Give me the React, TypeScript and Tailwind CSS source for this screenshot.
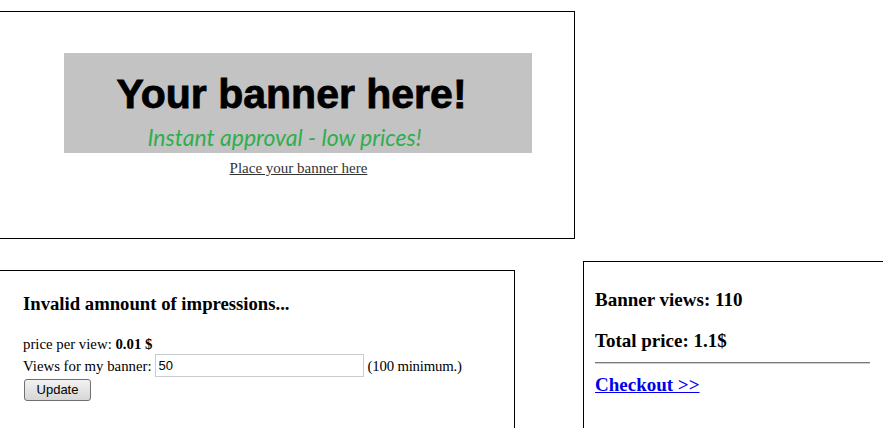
import { useState } from "react";

const serif = "font-['Liberation_Serif',serif]";

const App = () => {
  const [views, setViews] = useState("50");

  return (
    <div className={`h-[428px] w-full overflow-hidden bg-white text-black ${serif}`}>
      {/* banner box */}
      <div className="mt-[11px] -ml-[2px] flex h-[228px] w-[577px] flex-col items-center border border-black pl-[24px] pt-[41px]">
        <div className="-ml-[2px] flex h-[100px] w-[468px] flex-col items-center bg-[#c3c3c3]">
          <div className="mt-[19px] pr-[12px] font-['Liberation_Sans',sans-serif] text-[41px] font-bold leading-[44px] [-webkit-text-stroke:0.8px_black]">
            Your banner here!
          </div>
          <div className="mt-[8px] -ml-[26px] font-['Lato',sans-serif] text-[23px] italic leading-[26px] text-[#2fae4e]">
            Instant approval - low prices!
          </div>
        </div>
        <a href="#" className="mt-[6px] text-[15px] leading-[18px] text-[#333] underline">
          Place your banner here
        </a>
      </div>

      <div className="flex items-start">
        {/* order form */}
        <div className="-ml-[2px] mt-[31px] h-[200px] w-[517px] shrink-0 border border-black pl-[24px] pt-[22px]">
          <h3 className="text-[18.7px] font-bold leading-[22px]">Invalid amnount of impressions...</h3>
          <div className="mt-[20px] text-[14.8px] leading-[18px]">
            price per view: <b>0.01 $</b>
          </div>
          <div className="mt-[1px] flex items-center text-[14.8px] leading-[18px]">
            <span>Views for my banner:</span>
            <input
              value={views}
              onChange={(e) => setViews(e.target.value)}
              className="ml-[3px] h-[23px] w-[209px] border border-[#c9ccd1] px-[3px] font-['Liberation_Sans',sans-serif] text-[13px] outline-none"
            />
            <span className="ml-[4px] tracking-[-0.2px]">(100 minimum.)</span>
          </div>
          <button className="ml-[1px] mt-[1px] h-[22px] w-[67px] rounded-[3px] border border-[#707070] bg-gradient-to-b from-[#f2f2f2] to-[#d6d6d6] font-['Liberation_Sans',sans-serif] text-[13px] leading-[20px]">
            Update
          </button>
        </div>

        {/* summary */}
        <div className="ml-[68px] mt-[22px] h-[200px] w-[320px] shrink-0 border border-black pl-[11px] pt-[27px]">
          <h3 className="text-[19px] font-bold leading-[22px]">Banner views: 110</h3>
          <h3 className="mt-[19px] text-[19px] font-bold leading-[22px]">Total price: 1.1$</h3>
          <hr className="mt-[10px] w-[275px] border-t border-b border-t-[#7a7a7a] border-b-[#cfcfcf]" />
          <a href="#" className="mt-[10px] block text-[19px] font-bold leading-[22px] text-[#0000ee] underline">
            Checkout &gt;&gt;
          </a>
        </div>
      </div>
    </div>
  );
};

export default App;
